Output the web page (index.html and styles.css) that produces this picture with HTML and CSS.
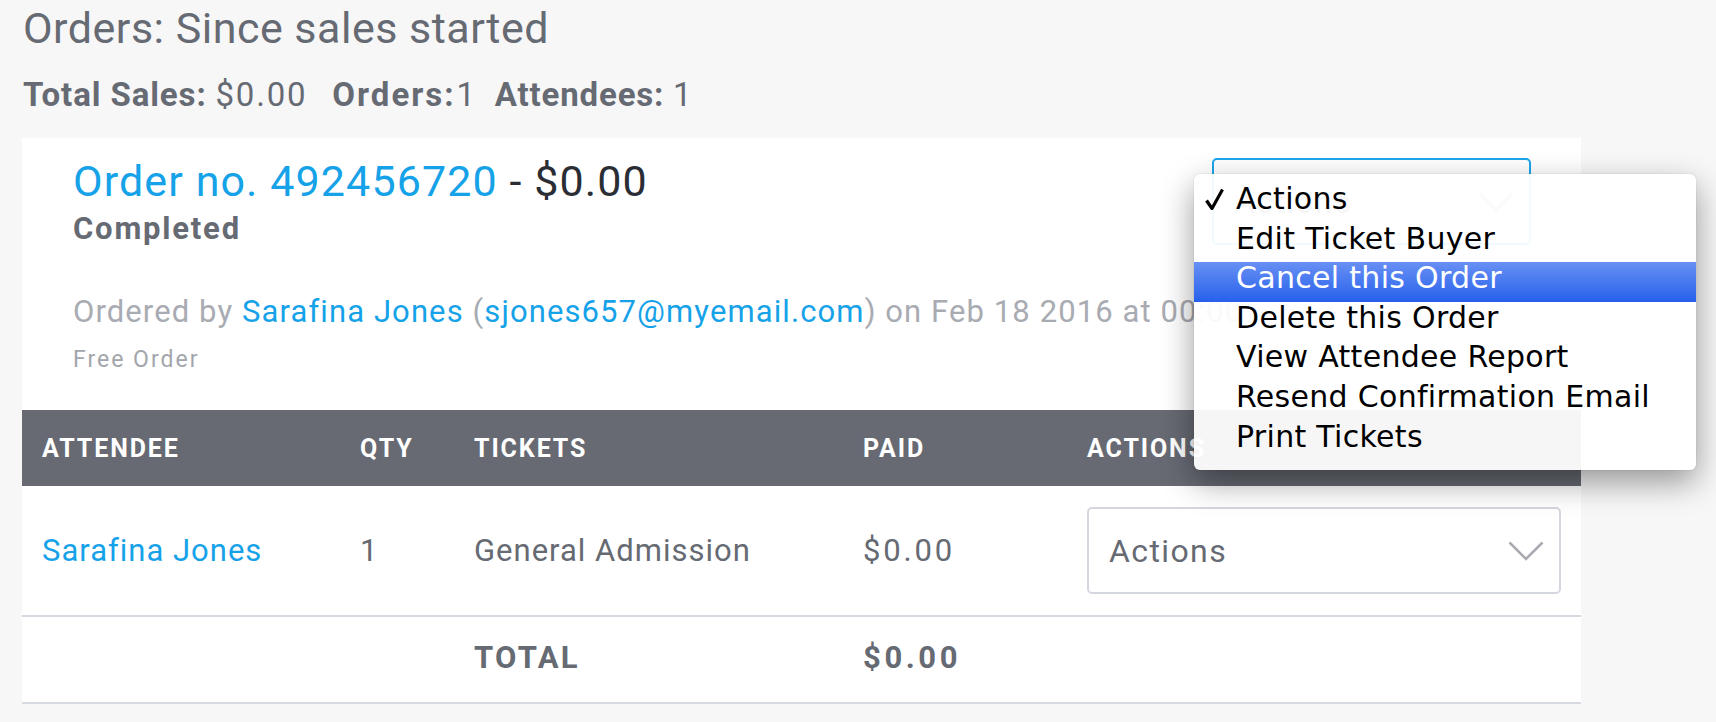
FILE: index.html
```html
<!DOCTYPE html>
<html lang="en">
<head>
<meta charset="utf-8">
<title>Orders</title>
<link rel="stylesheet" href="styles.css">
</head>
<body>
<main class="page">
  <h1 class="page-title">Orders: Since sales started</h1>
  <p class="stats">
    <span class="stat stat-sales"><b>Total Sales:</b> <span class="amt">$0.00</span></span>
    <span class="stat stat-orders"><b>Orders:</b><span class="num">1</span></span>
    <span class="stat stat-attendees"><b>Attendees:</b> 1</span>
  </p>

  <section class="card">
    <div class="order-head">
      <div class="order-info">
        <h2 class="order-title"><a href="#">Order no. 492456720</a> - <span class="amount">$0.00</span></h2>
        <div class="status">Completed</div>
        <p class="ordered-by">Ordered by <a href="#">Sarafina Jones</a> (<a href="#">sjones657@myemail.com</a>) on Feb 18 2016 at 00:00</p>
        <p class="free">Free Order</p>
      </div>
      <div class="select select-focus">
        <span>Actions</span>
        <svg class="chev" width="36" height="20" viewBox="0 0 36 20"><polyline points="1.5,1.5 18,18 34.5,1.5" fill="none" stroke="#a9abb1" stroke-width="2.6"/></svg>
      </div>
    </div>

    <div class="table">
      <div class="row row-head">
        <div>Attendee</div>
        <div>Qty</div>
        <div>Tickets</div>
        <div>Paid</div>
        <div>Actions</div>
      </div>
      <div class="row row-body">
        <div><a href="#">Sarafina Jones</a></div>
        <div>1</div>
        <div>General Admission</div>
        <div class="amt">$0.00</div>
        <div>
          <div class="select">
            <span>Actions</span>
            <svg class="chev" width="36" height="20" viewBox="0 0 36 20"><polyline points="1.5,1.5 18,18 34.5,1.5" fill="none" stroke="#a9abb1" stroke-width="2.6"/></svg>
          </div>
        </div>
      </div>
      <div class="row row-total">
        <div></div>
        <div></div>
        <div>Total</div>
        <div class="amt">$0.00</div>
        <div></div>
      </div>
    </div>
  </section>

  <ul class="menu">
    <li class="checked"><svg class="check" width="19" height="22" viewBox="0 0 19 22"><path d="M1.5 12.5 L7 20.5 L17.5 1.5" fill="none" stroke="#000" stroke-width="3.2" stroke-linejoin="round"/></svg>Actions</li>
    <li>Edit Ticket Buyer</li>
    <li class="active">Cancel this Order</li>
    <li>Delete this Order</li>
    <li>View Attendee Report</li>
    <li>Resend Confirmation Email</li>
    <li>Print Tickets</li>
  </ul>
</main>
</body>
</html>
```

FILE: styles.css
```css
* { box-sizing: border-box; }

html, body {
  margin: 0;
  background: #f7f7f8;
}

body {
  font-family: Roboto, "Liberation Sans", Arial, sans-serif;
  color: #666a73;
}

a { color: #16a2e8; text-decoration: none; }

.page {
  position: relative;
  width: 1716px;
  height: 722px;
  overflow: hidden;
  padding: 3px 0 0 22px;
}

.page-title {
  margin: 0 0 0 1px;
  font-size: 43px;
  line-height: 50px;
  font-weight: 400;
  letter-spacing: 0.5px;
  color: #666a73;
}

.stats {
  margin: 22px 0 0 1px;
  display: flex;
  font-size: 33px;
  line-height: 40px;
  letter-spacing: 0.6px;
}

.stats b { font-weight: 700; }

.stat-sales { margin-right: 25px; }
.stat-sales b { letter-spacing: 0.9px; }
.stat-sales .amt { letter-spacing: 1.8px; }
.stat-orders { margin-right: 19px; }
.stat-orders b { letter-spacing: 2px; }
.stat-orders .num { margin-left: 1px; }
.stat-attendees b { letter-spacing: 0.85px; }

.card {
  margin-top: 23px;
  width: 1559px;
  background: #fff;
}

.order-head {
  display: flex;
  justify-content: space-between;
  align-items: flex-start;
  padding: 18px 50px 36px 51px;
}

.order-info {
  flex: 1;
  min-width: 0;
}

.order-title {
  margin: 0;
  font-size: 43px;
  line-height: 50px;
  font-weight: 400;
  letter-spacing: 1.1px;
  color: #2a2d34;
}

.status {
  margin-top: 5px;
  font-size: 31px;
  line-height: 36px;
  font-weight: 700;
  letter-spacing: 1.8px;
  color: #666a73;
}

.ordered-by {
  margin: 47px 0 0;
  font-size: 31px;
  line-height: 36px;
  letter-spacing: 1.1px;
  color: #a9abb2;
  white-space: nowrap;
}

.free {
  margin: 16px 0 0;
  font-size: 23px;
  line-height: 28px;
  letter-spacing: 2px;
  color: #a3a5ac;
}

.select {
  height: 87px;
  border: 2px solid #d5d7de;
  border-radius: 5px;
  display: flex;
  align-items: center;
  justify-content: space-between;
  padding: 0 15px 0 20px;
  font-size: 32px;
  letter-spacing: 1.4px;
  color: #666a73;
  background: #fff;
}

.select-focus {
  flex: none;
  width: 319px;
  margin-top: 2px;
  border-color: #1ba6ea;
}

.row {
  display: grid;
  grid-template-columns: 318px 114px 389px 224px 1fr;
  align-items: center;
  padding: 0 20px;
}

.row-head {
  height: 76px;
  background: #676a73;
  color: #fff;
  font-size: 25px;
  font-weight: 700;
  letter-spacing: 1.9px;
  text-transform: uppercase;
}

.row-body {
  height: 131px;
  border-bottom: 2px solid #d8dae1;
  font-size: 31px;
  letter-spacing: 1px;
}

.row-body .amt { letter-spacing: 2.8px; }

.row-total {
  height: 87px;
  padding-bottom: 5px;
  border-bottom: 2px solid #d8dae1;
  font-size: 31px;
  font-weight: 700;
  letter-spacing: 2.3px;
  text-transform: uppercase;
}

.row-total .amt { letter-spacing: 3.6px; }

.menu {
  position: absolute;
  left: 1194px;
  top: 174px;
  width: 502px;
  height: 296px;
  margin: 0;
  padding: 9px 0 10px;
  list-style: none;
  background: rgba(255, 255, 255, 0.94);
  border-radius: 6px;
  box-shadow: 0 12px 32px rgba(0, 0, 0, 0.4), 0 0 1px rgba(0, 0, 0, 0.35);
  font-family: "DejaVu Sans", Verdana, sans-serif;
  font-size: 30px;
  letter-spacing: 0.3px;
  color: #000;
}

.menu li {
  position: relative;
  height: 39.6px;
  line-height: 31px;
  padding-left: 42px;
  white-space: nowrap;
}

.menu .check {
  position: absolute;
  left: 11px;
  top: 5px;
}

.menu li.active {
  background: linear-gradient(#6890f4, #2660eb);
  color: #fff;
}
```
